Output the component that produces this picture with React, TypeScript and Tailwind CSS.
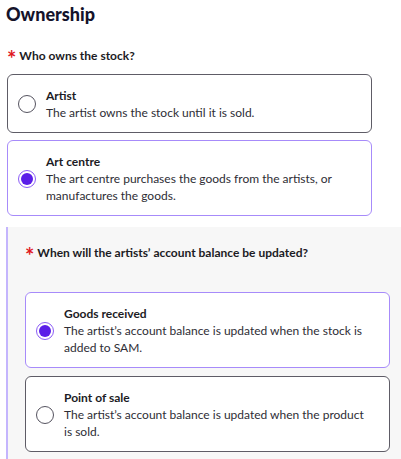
import React, { useState } from 'react';

type Option = { id: string; title: string; desc: string };

const ownerOptions: Option[] = [
  { id: 'artist', title: 'Artist', desc: 'The artist owns the stock until it is sold.' },
  { id: 'centre', title: 'Art centre', desc: 'The art centre purchases the goods from the artists, or manufactures the goods.' },
];

const balanceOptions: Option[] = [
  { id: 'received', title: 'Goods received', desc: 'The artist’s account balance is updated when the stock is added to SAM.' },
  { id: 'sale', title: 'Point of sale', desc: 'The artist’s account balance is updated when the product is sold.' },
];

const Radio: React.FC<{ checked: boolean }> = ({ checked }) =>
  checked ? (
    <span className="flex h-[18px] w-[18px] shrink-0 items-center justify-center rounded-full border-[1.5px] border-[#8b5cf6] bg-white">
      <span className="h-[12px] w-[12px] rounded-full bg-[#5b1ee8]" />
    </span>
  ) : (
    <span className="h-[18px] w-[18px] shrink-0 rounded-full border-[1.5px] border-[#55535f] bg-white" />
  );

const OptionCard: React.FC<{ option: Option; checked: boolean; onSelect: () => void }> = ({ option, checked, onSelect }) => (
  <button
    onClick={onSelect}
    className={`flex w-[365px] items-center gap-[10px] rounded-[6px] border bg-white pt-[12px] pb-[11px] pl-[10px] pr-5 text-left ${
      checked ? 'border-[#a78bfa]' : 'border-[#5e5c66]'
    }`}
  >
    <Radio checked={checked} />
    <div className="flex flex-col">
      <span className="text-[12px] font-bold leading-[17px] text-[#1c1b24]">{option.title}</span>
      <span className="text-[12px] leading-[17px] text-[#2e2d35]">{option.desc}</span>
    </div>
  </button>
);

const Question: React.FC<{ label: string }> = ({ label }) => (
  <div className="flex items-center gap-[3px] text-[12px] font-bold text-[#1c1b24]">
    <span className="translate-y-[3px] text-[22px] leading-none text-[#e0191f]">*</span>
    <span>{label}</span>
  </div>
);

export default function App() {
  const [owner, setOwner] = useState('centre');
  const [balance, setBalance] = useState('received');

  return (
    <div className="min-h-[459px] bg-white pt-[2px]" style={{ fontFamily: 'Lato, "Open Sans", sans-serif' }}>
      <h1 className="ml-[6px] text-[18px] font-black leading-[24px] text-[#15132b]">Ownership</h1>

      <div className="ml-[7px] mt-[19px]">
        <Question label="Who owns the stock?" />
      </div>

      <div className="ml-[7px] mt-[7px] flex flex-col gap-[7px]">
        {ownerOptions.map(o => (
          <OptionCard key={o.id} option={o} checked={owner === o.id} onSelect={() => setOwner(o.id)} />
        ))}
      </div>

      <div className="ml-[6px] mt-[11px] min-h-[232px] border-l-2 border-[#c4b5fd] bg-[#f7f7f7] pl-[17px] pt-[15px] pb-[8px]">
        <Question label="When will the artists’ account balance be updated?" />
        <div className="mt-[28px] flex flex-col gap-[8px]">
          {balanceOptions.map(o => (
            <OptionCard key={o.id} option={o} checked={balance === o.id} onSelect={() => setBalance(o.id)} />
          ))}
        </div>
      </div>
    </div>
  );
}
